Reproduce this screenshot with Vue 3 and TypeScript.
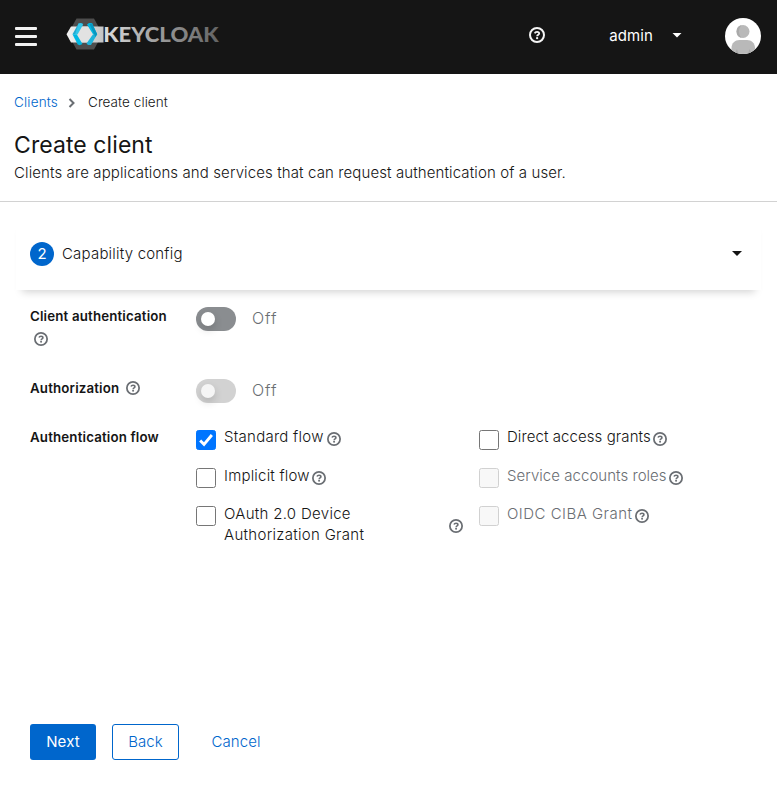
<script setup lang="ts">
import { defineComponent, h, ref } from 'vue'

interface Flow {
  id: string
  label: string
  disabled?: boolean
}

const HelpIcon = defineComponent({
  name: 'HelpIcon',
  setup() {
    return () =>
      h('svg', { class: 'help', viewBox: '0 0 16 16', 'aria-hidden': 'true' }, [
        h('circle', { cx: 8, cy: 8, r: 7, fill: 'none', stroke: 'currentColor', 'stroke-width': 2 }),
        h('path', {
          d: 'M5.7 6.400C6.100 5.300 6.900 4.900 8 4.900c1.300 0 2.200.65 2.200 1.600 0 1.300-2.050 1.300-2.050 2.800',
          fill: 'none',
          stroke: 'currentColor',
          'stroke-width': 1.8,
        }),
        h('circle', { cx: 8.1, cy: 11.2, r: 1.15, fill: 'currentColor' }),
      ])
  },
})

const clientAuth = ref(false)
const authorization = ref(false)
const selected = ref<string[]>(['standard'])
const flows: Flow[] = [
  { id: 'standard', label: 'Standard flow' },
  { id: 'direct', label: 'Direct access grants' },
  { id: 'implicit', label: 'Implicit flow' },
  { id: 'service', label: 'Service accounts roles', disabled: true },
  { id: 'device', label: 'OAuth 2.0 Device Authorization Grant' },
  { id: 'ciba', label: 'OIDC CIBA Grant', disabled: true },
]
</script>

<template>
  <div class="page">
    <header class="masthead">
      <button class="menu" aria-label="Menu"><i /><i /><i /></button>
      <svg class="logo" viewBox="0 0 154 34" role="img">
        <defs>
          <linearGradient id="word" x1="0" x2="1">
            <stop offset="0" stop-color="#dedede" />
            <stop offset="0.5" stop-color="#999" />
            <stop offset="1" stop-color="#636363" />
          </linearGradient>
          <linearGradient id="band" x1="0" x2="1">
            <stop offset="0" stop-color="#f2f2f2" />
            <stop offset="1" stop-color="#c4c4c4" />
          </linearGradient>
        </defs>
        <path d="M10.500 1.500h17.500l8.500 15.500L28 32.500H10.500L2 17z" fill="#4d4d4d" />
        <path d="M5 9.500h32.500V25.500H5L.5 17.300z" fill="url(#band)" />
        <path d="M12 9.500h10l5.500 8-5.500 8H12L7.500 17.500z" fill="#e2e2e2" />
        <path d="M12.500 6.500h4.500L10.700 17.300 6.500 17.300z" fill="#23a9cf" />
        <path d="M6.500 17.300h4.200l5.800 9.700-2.800 1.300-2-.9z" fill="#00b8e3" />
        <path d="M12.500 6.500l2.500-.4 2.200 1.500-5.700 9.900H9z" fill="#33c6e9" />
        <path d="M21 7.500l2-1.500h3l5.200 11.300H27z" fill="#00b8e3" />
        <path d="M27 17.300h4.200L25 27.900l-3 .2-1.500-1.500z" fill="#1eb3da" />
        <path d="M26 6.300l5.200 11-1.800 2.800L23.500 7z" fill="#0996bf" />
        <text class="wordmark" x="37.200" y="25.300" textLength="115.500" lengthAdjust="spacingAndGlyphs" fill="url(#word)">KEYCLOAK</text>
      </svg>
      <span class="spacer" />
      <HelpIcon />
      <button class="user"><span>admin</span><b class="caret" /></button>
      <svg class="avatar" viewBox="0 0 36 36">
        <defs><clipPath id="round"><circle cx="18" cy="18" r="18" /></clipPath></defs>
        <g clip-path="url(#round)">
          <path d="M0 0h36v36H0z" fill="#fff" />
          <path d="M6.500 36v-6c0-5 3.500-8 8-8h7.500c4.500 0 8 3 8 8v6z" fill="#b9b9b9" />
          <path d="M12 31l1.500 5H9.500zM24.500 31L23 36h4z" fill="#a9a9a9" />
          <circle cx="18" cy="13.500" r="6.500" fill="#b9b9b9" />
          <path d="M17 7a6.600 6.600 0 0 0 0 13c-4-3-4-10 0-13z" fill="#a9a9a9" />
        </g>
      </svg>
    </header>

    <section class="title">
      <nav class="crumbs">
        <a class="crumb-link">Clients</a>
        <svg viewBox="0 0 8 10"><path d="M1.500 1l4 4-4 4" fill="none" stroke="#6a6e73" stroke-width="2" /></svg>
        <span>Create client</span>
      </nav>
      <h1>Create client</h1>
      <p>Clients are applications and services that can request authentication of a user.</p>
    </section>

    <main class="wizard">
      <div class="step">
        <span class="number">2</span>
        <span class="step-name">Capability config</span>
        <b class="caret" />
      </div>

      <form class="form" @submit.prevent>
        <div class="row auth">
          <div class="label"><span class="client-auth">Client authentication</span> <HelpIcon /></div>
          <label class="switch">
            <input v-model="clientAuth" type="checkbox" /><i /><span>{{ clientAuth ? 'On' : 'Off' }}</span>
          </label>
        </div>
        <div class="row authz">
          <div class="label"><span>Authorization</span> <HelpIcon /></div>
          <label class="switch off">
            <input v-model="authorization" type="checkbox" disabled /><i /><span>{{ authorization ? 'On' : 'Off' }}</span>
          </label>
        </div>
        <div class="row">
          <div class="label flow-label"><span>Authentication flow</span></div>
          <div class="flows">
            <div v-for="f in flows" :key="f.id" class="flow" :class="[f.id, { disabled: f.disabled }]">
              <label>
                <input v-model="selected" type="checkbox" :value="f.id" :disabled="f.disabled" />
                <span class="box"><svg v-if="selected.includes(f.id)" viewBox="0 0 20 20"><path d="M3.500 10.500l4.300 4.300L16.500 4.500" fill="none" stroke="#fff" stroke-width="3.200" /></svg></span>
                <span class="text">{{ f.label }}</span>
              </label>
              <HelpIcon />
            </div>
          </div>
        </div>
      </form>

      <footer class="actions">
        <button class="next">Next</button>
        <button class="back">Back</button>
        <button class="cancel">Cancel</button>
      </footer>
    </main>
  </div>
</template>

<style>
body { background: #fff; }
</style>

<style scoped>
* { box-sizing: border-box; }
.page {
  height: 789px;
  display: flex;
  flex-direction: column;
  overflow: hidden;
  font: 300 15px/24px Inter, "Noto Sans", sans-serif;
  color: #151515;
}
button { font: inherit; border: 0; background: none; padding: 0; color: inherit; }
input { display: none; }
.help { width: 14px; height: 14px; flex: none; color: #6a6e73; display: block; }
.caret {
  flex: none;
  width: 10px;
  height: 5px;
  background: currentColor;
  clip-path: polygon(0 0, 100% 0, 50% 100%);
}
.masthead {
  height: 74px;
  flex: none;
  display: flex;
  align-items: center;
  padding: 0 16px 2px 15px;
  background: #151515;
  color: #fff;
}
.menu { width: 22px; display: grid; gap: 5px; margin-right: 29px; }
.menu i { height: 3px; border-radius: 1px; background: #f2f2f2; }
.logo { width: 154px; height: 34px; margin-top: -5px; }
.wordmark { font: 900 21.500px Lato, sans-serif; }
.spacer { flex: 1; }
.masthead .help { width: 16px; height: 16px; color: #f5f5f5; margin: -2px 64px 0 0; }
.user { display: flex; align-items: center; gap: 19px; font-weight: 400; letter-spacing: 0.1px; margin: -2px 43px 0 0; }
.user span { padding-top: 2px; }
.avatar { width: 36px; height: 36px; }
.title { height: 128px; flex: none; padding: 18px 14px 0; border-bottom: 1px solid #d2d2d2; }
.crumbs { display: flex; align-items: center; font-size: 13.500px; line-height: 21px; letter-spacing: 0.06px; }
.crumbs svg { width: 8px; height: 10px; margin: 0 12px 0 10px; }
.crumb-link { color: #06c; letter-spacing: 0.18px; }
h1 { margin: 17px 0 0; font-size: 23px; line-height: 31px; font-weight: 400; letter-spacing: 0.08px; }
.title p { margin: 0; line-height: 24px; letter-spacing: 0.11px; }
.wizard { flex: 1; display: flex; flex-direction: column; padding: 16px 16px 29px; }
.step {
  height: 72px;
  display: flex;
  align-items: flex-start;
  padding: 24px 19px 0 14px;
  background: #fff;
  box-shadow: 0 8px 8px -6px rgba(3, 3, 3, 0.18), 0 0 1px rgba(3, 3, 3, 0.02);
}
.number {
  width: 24px;
  height: 24px;
  border-radius: 50%;
  background: #06c;
  color: #fff;
  text-align: center;
  font-weight: 400;
  margin-right: 8px;
}
.step-name { flex: 1; letter-spacing: 0.2px; }
.step .caret { margin-top: 9px; }
.form { padding: 16px 14px 0; flex: 1; }
.row { display: grid; grid-template-columns: 150px 1fr; column-gap: 16px; }
.auth { height: 72px; }
.authz { height: 48px; }
.label { display: flex; flex-wrap: wrap; align-content: flex-start; align-items: center; font-size: 13.300px; font-weight: 600; line-height: 21px; }
.label span { letter-spacing: 0.16px; }
.label .help { margin: -1px 0 0 7px; }
.auth .help { margin: 5px 4px 0; }
.flow-label { padding-top: 1px; }
.switch { display: flex; height: 24px; gap: 16px; color: #6a6e73; font-size: 16px; letter-spacing: 0.9px; margin-top: 1px; }
.switch span { line-height: 23px; }
.switch i { width: 40px; height: 24px; border-radius: 12px; background: #8a8d90; padding: 5px; }
.switch i::before { content: ''; display: block; width: 14px; height: 14px; border-radius: 50%; background: #fff; box-shadow: 0 4px 8px rgba(3, 3, 3, 0.16); }
.off i { background: #d2d2d2; }
.off i::before { background: #f5f5f5; }
.flows { display: grid; grid-template-columns: 267px 1fr; column-gap: 16px; row-gap: 15px; margin-top: 1px; }
.flow { display: flex; align-items: flex-start; line-height: 21px; }
.flow label { display: flex; gap: 8px; }
.box { width: 20px; height: 20px; flex: none; margin-top: 3px; border: 1px solid #767676; border-radius: 2.500px; background: #fff; }
.box:has(svg) { background: #0075ff; border-color: #0075ff; }
.box svg { display: block; width: 18px; height: 18px; }
.flow .help { margin: 6px 0 0 2px; }
.disabled .box { background: #f8f8f8; border-color: #d1d1d1; }
.disabled .text { color: #6a6e73; }
.standard .text { letter-spacing: 0.26px; }
.implicit .text { letter-spacing: 0.2px; }
.direct .text { letter-spacing: 0.08px; }
.service .text { letter-spacing: 0.04px; }
.ciba .text { letter-spacing: 0.48px; }
.standard .text, .direct .text { margin-top: -1px; }
.flow.standard .help, .flow.direct .help { margin-top: 5px; }
.flow.standard .help, .flow.ciba .help { margin-left: 3px; }
.device { justify-content: space-between; }
.device .text { width: 150px; letter-spacing: 0.3px; }
.flow.device .help { margin-top: 16px; }
.actions { display: flex; gap: 16px; padding-left: 14px; }
.actions button { height: 36px; border-radius: 3px; font-weight: 400; }
.actions .next { width: 66px; background: #06c; color: #fff; letter-spacing: 0.15px; }
.actions .back { width: 67px; border: 1px solid #06c; color: #06c; font-weight: 300; }
.actions .cancel { width: 82px; color: #06c; font-weight: 300; letter-spacing: 0.1px; }
</style>
